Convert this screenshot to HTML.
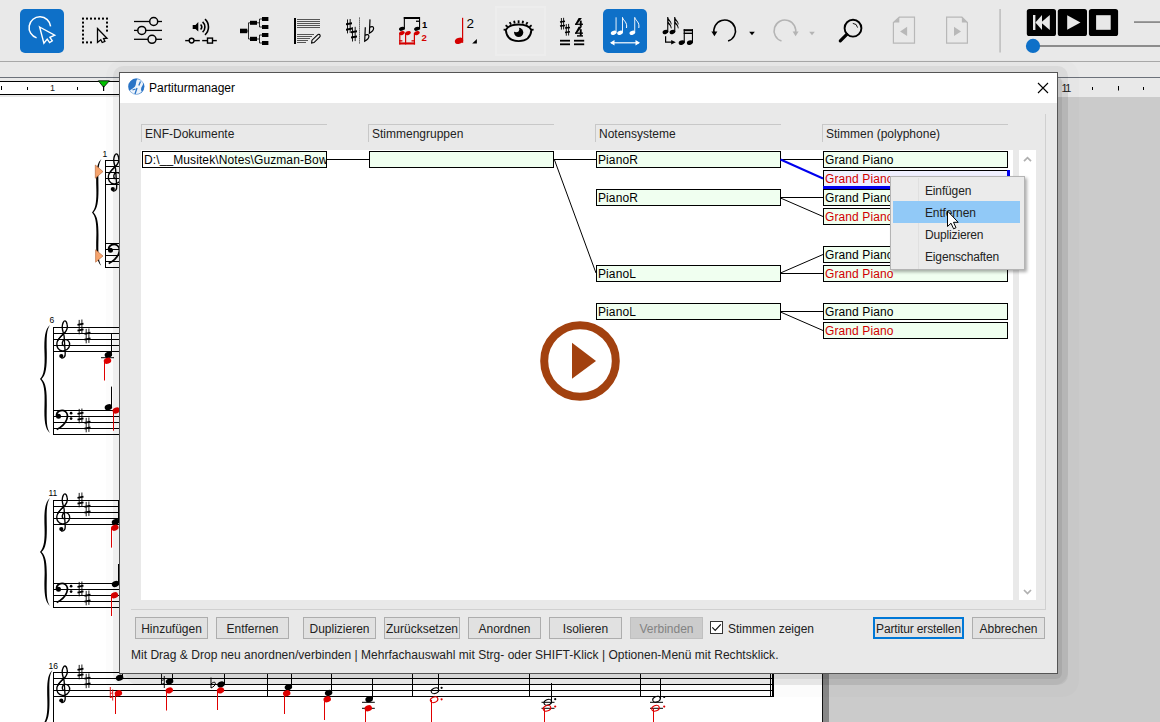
<!DOCTYPE html>
<html><head><meta charset="utf-8">
<style>
*{box-sizing:border-box}
html,body{margin:0;padding:0}
body{width:1160px;height:722px;position:relative;overflow:hidden;background:#e9e9e9;font-family:"Liberation Sans",sans-serif;font-size:12px;color:#000}
.a{position:absolute}
svg{position:absolute;overflow:visible}
.btn{position:absolute;white-space:nowrap;top:617px;height:22px;background:#e1e1e1;border:1px solid #adadad;text-align:center;line-height:22px;font-size:12px;color:#222}
.box{position:absolute;height:17px;border:1px solid #000;background:#f0fff0;font-size:12px;line-height:17px;padding-left:1px;white-space:nowrap;overflow:hidden;letter-spacing:0.1px}
.hdr{position:absolute;top:124px;height:18px;width:186px;border-top:1px solid #c8c8c8;border-left:1px solid #c8c8c8;font-size:12px;line-height:19px;padding-left:3px;color:#222}
.mi{position:absolute;left:925px;font-size:12px;color:#222;margin-top:1px;letter-spacing:-0.15px}
</style></head><body>
<svg width="1160" height="61" style="left:0;top:0" viewBox="0 0 1160 61">
<!-- 1 select tool (active) -->
<rect x="20" y="9" width="44" height="44" rx="5" fill="#0e70c8"/>
<path d="M36.6 37.9 A10.8 10.8 0 1 1 50.6 26.4" fill="none" stroke="#fff" stroke-width="1.5"/>
<path d="M39.6 27 L54.7 35.2 L49.9 37.3 L52.3 40.8 L49.6 42.6 L47.2 39.1 L43.9 43.3 Z" fill="#0e70c8" stroke="#fff" stroke-width="1.4" stroke-linejoin="miter"/>
<!-- 2 rectangle select -->
<g fill="#000">
<rect x="82" y="17.6" width="2" height="2"/><rect x="86" y="17.6" width="2" height="2"/><rect x="90" y="17.6" width="2" height="2"/><rect x="94" y="17.6" width="2" height="2"/><rect x="98" y="17.6" width="2" height="2"/><rect x="102" y="17.6" width="2" height="2"/><rect x="106" y="17.6" width="2" height="2"/>
<rect x="82" y="21.6" width="2" height="2"/><rect x="82" y="25.6" width="2" height="2"/><rect x="82" y="29.6" width="2" height="2"/><rect x="82" y="33.6" width="2" height="2"/><rect x="82" y="37.6" width="2" height="2"/><rect x="82" y="41.4" width="2" height="2"/>
<rect x="86" y="41.4" width="2" height="2"/><rect x="90" y="41.4" width="2" height="2"/>
<rect x="106" y="21.6" width="2" height="2"/><rect x="106" y="25.6" width="2" height="2"/><rect x="106" y="29.6" width="2" height="2"/>
</g>
<path d="M97.5 28.5 L107 38.2 L103.6 38.6 L104.9 41.4 L102.2 42.5 L100.8 39.8 L97.5 42.4 Z" fill="#e9e9e9" stroke="#000" stroke-width="1.3"/>
<!-- 3 sliders -->
<g stroke="#000" stroke-width="1.3" fill="#e9e9e9">
<line x1="134" y1="21.5" x2="162" y2="21.5"/><line x1="134" y1="30.4" x2="162" y2="30.4"/><line x1="134" y1="39.3" x2="162" y2="39.3"/>
<circle cx="153.7" cy="21.5" r="4" stroke-width="1.5"/><circle cx="141.8" cy="30.4" r="4" stroke-width="1.5"/><circle cx="152" cy="39.3" r="4" stroke-width="1.5"/>
</g>
<!-- 4 speaker -->
<path d="M192.7 25 L195.5 25 L198.3 22 L198.3 31.6 L195.5 29 L192.7 29 Z" fill="#000"/>
<g fill="none" stroke="#000" stroke-width="1.6">
<path d="M200.6 24.5 A3.6 3.6 0 0 1 200.6 29.5"/>
<path d="M202.6 21.8 A7 7 0 0 1 202.6 32.2"/>
<path d="M205 19.2 A10.5 10.5 0 0 1 205 34.8"/>
</g>
<g stroke="#000" stroke-width="1.4" fill="#e9e9e9">
<line x1="185.2" y1="40.6" x2="199.8" y2="40.6"/><line x1="202.2" y1="40.6" x2="216.8" y2="40.6"/>
<circle cx="191.6" cy="40.6" r="2.4"/><rect x="207.5" y="38.1" width="5" height="5"/>
</g>
<!-- 5 tree -->
<g fill="#000">
<rect x="240" y="28.7" width="7.3" height="4.5"/>
<rect x="250" y="20.8" width="7" height="4"/><rect x="250" y="36.8" width="7" height="4.2"/>
<rect x="262" y="17" width="6.4" height="4"/><rect x="262" y="25" width="6.4" height="4"/><rect x="262" y="33" width="6.4" height="4"/><rect x="262" y="41" width="6.4" height="4"/>
</g>
<g stroke="#000" stroke-width="0.8" fill="none">
<path d="M247 31 H248.5 M248.5 22.8 V39 M248.5 22.8 H250 M248.5 39 H250"/>
<path d="M257 22.8 H259.5 M259.5 19 V27 M259.5 19 H262 M259.5 27 H262"/>
<path d="M257 39 H259.5 M259.5 35 V43 M259.5 35 H262 M259.5 43 H262"/>
</g>
<!-- 6 score edit -->
<rect x="294" y="18" width="2" height="26" fill="#000"/>
<g fill="#555">
<rect x="297" y="19" width="23" height="1"/><rect x="297" y="21" width="23" height="1"/><rect x="297" y="23" width="23" height="1"/><rect x="297" y="25" width="23" height="1"/><rect x="297" y="27" width="23" height="1"/>
<rect x="297" y="34" width="17" height="1"/><rect x="297" y="36" width="15" height="1"/><rect x="297" y="38" width="13" height="1"/><rect x="297" y="40" width="11" height="1"/><rect x="297" y="42" width="9" height="1"/>
</g>
<path d="M311.6 43 L312 40.2 L317.6 34.8 C318.4 34 319.6 34.2 320 35 C320.4 35.8 320.2 36.6 319.6 37.2 L314 42.6 Z" fill="#e9e9e9" stroke="#000" stroke-width="1.1"/>
<!-- 7 sharps | flats -->
<g fill="#000">
<rect x="347" y="19.4" width="0.9" height="14"/><rect x="349.7" y="19" width="0.9" height="14"/>
<rect x="352" y="27.2" width="0.9" height="14.3"/><rect x="354.7" y="26.8" width="0.9" height="14.3"/>
<path d="M346 23.3 L352 22.2 L352 24.2 L346 25.3 Z"/><path d="M346 28.7 L352 27.6 L352 29.6 L346 30.7 Z"/>
<path d="M351 31.3 L357 30.2 L357 32.2 L351 33.3 Z"/><path d="M351 36.6 L357 35.5 L357 37.5 L351 38.6 Z"/>
</g>
<line x1="359.5" y1="17.6" x2="359.5" y2="44" stroke="#000" stroke-width="0.9" stroke-dasharray="1 1"/>
<g fill="none" stroke="#000">
<path d="M365.3 27.2 L364.7 41.2 C367 40 368.9 38.4 368.9 36.3 C368.9 34.4 366.8 34.2 364.9 35.6" stroke-width="1.2"/>
<path d="M370 19.4 L369.4 33.2 C371.7 32 373.6 30.4 373.6 28.3 C373.6 26.4 371.5 26.2 369.6 27.6" stroke-width="1.2"/>
</g>
<!-- 8 voices -->
<g fill="#000">
<rect x="403.8" y="17" width="16.2" height="2"/>
<rect x="403.8" y="17" width="1.1" height="12.5"/><rect x="419" y="17" width="1.1" height="12.5"/>
<rect x="416" y="20.6" width="4" height="1.3"/>
<ellipse cx="401.8" cy="28.8" rx="2.9" ry="1.9" transform="rotate(-20 401.8 28.8)"/>
<ellipse cx="416.9" cy="28.8" rx="2.9" ry="1.9" transform="rotate(-20 416.9 28.8)"/>
</g>
<text x="422" y="27.9" font-family="Liberation Sans" font-weight="bold" font-size="9.5" fill="#000">1</text>
<g fill="#d40000">
<ellipse cx="401.9" cy="33.1" rx="2.9" ry="1.9" transform="rotate(-20 401.9 33.1)"/>
<ellipse cx="408" cy="33.1" rx="2.9" ry="1.9" transform="rotate(-20 408 33.1)"/>
<ellipse cx="416.9" cy="33.1" rx="2.9" ry="1.9" transform="rotate(-20 416.9 33.1)"/>
<rect x="399.2" y="33" width="1.2" height="11.5"/><rect x="405" y="33" width="1.2" height="11.5"/><rect x="413.8" y="33" width="1.2" height="11.5"/>
<rect x="399.2" y="42.4" width="15.9" height="2.1"/>
<rect x="399.2" y="40.2" width="3.2" height="1.3"/><rect x="411.5" y="40.2" width="3.2" height="1.3"/>
</g>
<text x="421.6" y="40.9" font-family="Liberation Sans" font-weight="bold" font-size="9.6" fill="#d40000">2</text>
<!-- 9 note 2 -->
<rect x="462" y="17.8" width="1.2" height="25" fill="#d40000"/>
<ellipse cx="459" cy="40.8" rx="4.3" ry="2.9" transform="rotate(-22 459 40.8)" fill="#d40000"/>
<text x="466.6" y="28.1" font-family="Liberation Sans" font-size="13.5" fill="#000">2</text>
<path d="M472.2 43.6 L476.9 43.6 L476.9 38.9 Z" fill="#000"/>
<!-- 10 eye -->
<rect x="495" y="6" width="51" height="50" fill="#ededed"/><rect x="497" y="8" width="47" height="46" fill="#eaeaea"/>
<path d="M505.8,30 C509.5,22.6 527.7,22.6 531.4,30 C530.8,37.5 526,41.1 518.6,41.1 C511.2,41.1 506.4,37.5 505.8,30 Z" fill="#eaeaea" stroke="#000" stroke-width="1.9"/>
<g stroke="#000" stroke-width="1.8">
<line x1="506.4" y1="29.8" x2="503.6" y2="29.6"/><line x1="507.8" y1="26.9" x2="505.6" y2="25.2"/><line x1="511" y1="24.6" x2="509.7" y2="22.1"/><line x1="514.7" y1="23.5" x2="514.1" y2="20.7"/><line x1="518.6" y1="23.2" x2="518.6" y2="20.3"/><line x1="522.5" y1="23.5" x2="523.1" y2="20.7"/><line x1="526.2" y1="24.6" x2="527.5" y2="22.1"/><line x1="529.4" y1="26.9" x2="531.6" y2="25.2"/><line x1="530.8" y1="29.8" x2="533.6" y2="29.6"/>
</g>
<circle cx="518.7" cy="32.4" r="4.6" fill="#000"/>
<circle cx="516.2" cy="29.3" r="3" fill="#eaeaea"/>
<!-- 11 key/time sig -->
<g stroke="#000" fill="none">
<g stroke-width="0.9"><line x1="561.4" y1="18" x2="561.4" y2="29.6"/><line x1="563.6" y1="17.8" x2="563.6" y2="29.4"/><line x1="566.3" y1="24.1" x2="566.3" y2="35.7"/><line x1="568.6" y1="23.9" x2="568.6" y2="35.5"/></g>
<g stroke-width="1.5"><line x1="560" y1="21.9" x2="565" y2="21.2"/><line x1="560" y1="26.1" x2="565" y2="25.4"/><line x1="565" y1="28.1" x2="570" y2="27.4"/><line x1="565" y1="32.5" x2="570" y2="31.8"/></g>
</g>
<g fill="#000">
<path d="M578.6 18 L581.9 18 L576.7 24.8 L574.9 24.8 Z"/><rect x="575" y="23.6" width="8" height="1.3"/><rect x="579.8" y="20.6" width="1.9" height="6.2"/>
<path d="M578.6 26.8 L581.9 26.8 L576.7 33.6 L574.9 33.6 Z"/><rect x="575" y="32.5" width="8" height="1.3"/><rect x="579.8" y="29.2" width="1.9" height="6.6"/><rect x="577" y="35.2" width="6" height="1.4"/>
</g>
<g fill="#000">
<rect x="560" y="39.8" width="10" height="1.8"/><rect x="560" y="43.4" width="10" height="1.8"/>
<rect x="574" y="39.8" width="10.2" height="1.8"/><rect x="574" y="43.4" width="10.2" height="1.8"/>
</g>
<!-- 12 spacing (active) -->
<rect x="603" y="9" width="44" height="44" rx="5" fill="#0e70c8"/>
<g fill="#fff">
<rect x="615.6" y="17.3" width="0.9" height="15.5"/><rect x="622" y="17.3" width="0.9" height="15.5"/><rect x="634.3" y="17.3" width="0.9" height="15.5"/>
<ellipse cx="613.6" cy="32.8" rx="2.9" ry="2" transform="rotate(-20 613.6 32.8)"/>
<ellipse cx="620" cy="32.8" rx="2.9" ry="2" transform="rotate(-20 620 32.8)"/>
<ellipse cx="632.3" cy="32.8" rx="2.9" ry="2" transform="rotate(-20 632.3 32.8)"/>
</g>
<g fill="none" stroke="#fff" stroke-width="1">
<path d="M622.5 17.5 C623.5 21 627.5 22 626.5 28"/>
<path d="M634.8 17.5 C635.8 21 639.8 22 638.8 28"/>
<line x1="611" y1="42.8" x2="639" y2="42.8" stroke-width="1.2"/>
</g>
<path d="M610 42.8 L614.5 40 L614.5 45.6 Z M640 42.8 L635.5 40 L635.5 45.6 Z" fill="#fff"/>
<!-- 13 rhythm -->
<g fill="#000">
<rect x="667.2" y="17" width="1.1" height="15"/><rect x="674.2" y="17" width="1.1" height="15"/>
<ellipse cx="665.4" cy="32" rx="2.9" ry="2" transform="rotate(-20 665.4 32)"/>
<ellipse cx="672.4" cy="32" rx="2.9" ry="2" transform="rotate(-20 672.4 32)"/>
<path d="M667.8 17 C668.5 19.5 671.8 21 671.6 24.5 L670.8 24.2 C670.8 22 669 21 667.8 20.5 Z"/>
<path d="M667.8 20.5 C668.5 23 671.8 24.5 671.6 28.5 L670.8 28.2 C670.8 26 669 24.5 667.8 24 Z"/>
<path d="M674.8 17 C675.5 19.5 678.8 21 678.6 24.5 L677.8 24.2 C677.8 22 676 21 674.8 20.5 Z"/>
<path d="M674.8 20.5 C675.5 23 678.8 24.5 678.6 28.5 L677.8 28.2 C677.8 26 676 24.5 674.8 24 Z"/>
<rect x="683.7" y="29.2" width="1.1" height="13.5"/><rect x="691.9" y="29.2" width="1.1" height="13.5"/>
<rect x="683.7" y="29.2" width="9.3" height="2"/><rect x="683.7" y="32.6" width="9.3" height="1.4"/>
<ellipse cx="681.7" cy="42.6" rx="3.1" ry="2.2" transform="rotate(-20 681.7 42.6)"/>
<ellipse cx="689.9" cy="42.6" rx="3.1" ry="2.2" transform="rotate(-20 689.9 42.6)"/>
</g>
<path d="M665.6 36.2 V42.2 H672" fill="none" stroke="#000" stroke-width="1.2"/>
<path d="M675.8 42.2 L671.2 39.9 L671.2 44.5 Z" fill="#000"/>
<!-- 14 undo -->
<path d="M714.3 33.8 A10.8 10.8 0 1 1 728.1 41.1" fill="none" stroke="#000" stroke-width="1.6"/>
<path d="M711.4 31.6 L717.4 31.6 L714.4 36.2 Z" fill="#000"/>
<path d="M749.2 31.8 L754.8 31.8 L752 35.2 Z" fill="#000"/>
<!-- 15 redo (disabled) -->
<path d="M795.3 33.8 A10.8 10.8 0 1 0 781.5 41.1" fill="none" stroke="#b4b4b4" stroke-width="1.6"/>
<path d="M792.6 31.6 L798.6 31.6 L795.6 36.2 Z" fill="#b4b4b4"/>
<path d="M809.2 31.8 L814.8 31.8 L812 35.2 Z" fill="#b4b4b4"/>
<!-- 16 zoom -->
<circle cx="853" cy="28.2" r="8.4" fill="none" stroke="#000" stroke-width="1.9"/>
<path d="M852.8 23.4 A5 5 0 0 1 857.6 27.6" fill="none" stroke="#000" stroke-width="0.9"/>
<line x1="846.8" y1="34.4" x2="840.3" y2="40.9" stroke="#000" stroke-width="3.2" stroke-linecap="round"/>
<!-- 17 page prev -->
<path d="M899.3 17.2 L914.5 17.2 L914.5 43.2 L893.4 43.2 L893.4 22.6 Z" fill="none" stroke="#b8b8b8" stroke-width="1.2"/>
<path d="M893.6 22.6 L899.3 17.2 L899.3 22.6 Z" fill="#b8b8b8"/>
<path d="M900.1 31.4 L907.1 26.7 L907.1 36 Z" fill="#b8b8b8"/>
<!-- 18 page next -->
<path d="M946.6 17.2 L961.9 17.2 L967.4 22.6 L967.4 43.2 L946.6 43.2 Z" fill="none" stroke="#b8b8b8" stroke-width="1.2"/>
<path d="M961.9 17.2 L967.3 22.6 L961.9 22.6 Z" fill="#b8b8b8"/>
<path d="M961 31.4 L954 26.7 L954 36 Z" fill="#b8b8b8"/>
<!-- separator -->
<rect x="999.2" y="9" width="1.8" height="43.5" fill="#c4c4c4"/>
<!-- media -->
<rect x="1026.8" y="9" width="29.2" height="27" rx="2.6" fill="#000"/>
<rect x="1057.8" y="9" width="29.2" height="27" rx="2.6" fill="#000"/>
<rect x="1088.9" y="9" width="29.2" height="27" rx="2.6" fill="#000"/>
<g fill="#e8e8e8">
<rect x="1033" y="15" width="2.4" height="15"/>
<path d="M1035.4 22.5 L1042 15 L1042 30 Z"/><path d="M1041 22.5 L1049.8 15 L1049.8 30 Z"/>
<path d="M1067.2 15.2 L1080.5 22.4 L1067.2 29.8 Z"/>
<rect x="1096.1" y="15.2" width="14.6" height="14.6"/>
</g>
<rect x="1134" y="21.2" width="26" height="1.8" fill="#8c8c8c"/>
<rect x="1035" y="45" width="125" height="2" fill="#8c8c8c"/>
<circle cx="1033" cy="45.9" r="7.1" fill="#0e70c8"/>
</svg>

<!-- toolbar separator -->
<div class="a" style="left:0;top:61px;width:1160px;height:1px;background:#a8a8a8"></div>
<!-- ruler -->
<div class="a" style="left:0;top:77px;width:1160px;height:1px;background:#6c717a"></div>
<div class="a" style="left:0;top:81px;width:822px;height:14px;background:#fff;border-top:1px solid #000;border-bottom:1px solid #000"></div>

<!-- ruler ticks -->
<svg width="1160" height="20" style="left:0;top:78px" viewBox="0 78 1160 20">
<g fill="#000">
<rect x="1" y="86" width="1" height="4"/><rect x="27" y="87" width="1" height="3"/><rect x="77" y="87" width="1" height="3"/>
<rect x="1092" y="87" width="1" height="3"/><rect x="1118" y="86" width="1" height="4.5"/><rect x="1143" y="87" width="1" height="3"/>
</g>
<text x="50" y="91" font-family="Liberation Sans" font-size="9" fill="#222">1</text>
<text x="1061.5" y="91.5" font-family="Liberation Sans" font-size="11" fill="#222" letter-spacing="-1.6">11</text>
<path d="M98.4 80.8 L109.4 80.8 L103.6 87.3 Z" fill="#00c000" stroke="#000" stroke-width="0.8"/>
<rect x="103" y="86" width="1.2" height="5" fill="#000"/>
</svg>
<!-- page -->
<div class="a" style="left:0;top:97px;width:822px;height:625px;background:#fff"></div>
<div class="a" style="left:822px;top:97px;width:1px;height:625px;background:#111"></div>
<div class="a" style="left:823px;top:97px;width:6px;height:625px;background:#888"></div>
<div class="a" style="left:829px;top:97px;width:331px;height:625px;background:#cbcbcb"></div>

<!-- SCORE -->
<svg width="822" height="722" style="left:0;top:0" viewBox="0 0 822 722">
<defs>
<path id="tc" d="M7.4,18.6 C5.6,17.6 5.9,13.3 8.7,12.7 C12.1,12.1 14,15.2 13.6,18.1 C13.2,22 9.6,24.2 6.3,23.8 C2.1,23.2 0.3,19.6 0.9,16 C1.6,11.6 6.2,8.4 8.9,5.5 C11.1,3 11.7,0 11.1,-2.6 C10.6,-5.1 9.6,-6.1 8.9,-6.1 C7.8,-6.1 6.2,-3.6 6.2,0 C6.2,3.2 7.6,6.2 8.1,9 L9.2,26 C9.4,29.6 8,31.3 5.8,31.1" fill="none" stroke="#000" stroke-width="1.35" stroke-linecap="round"/>
<g id="tcg"><use href="#tc"/><path d="M1.6,14 C3,10.5 6.5,8 9.2,5.2" fill="none" stroke="#000" stroke-width="1.2"/><circle cx="5.3" cy="29.1" r="2.1" fill="#000"/></g>
<g id="bc"><circle cx="3" cy="6.2" r="2.5" fill="#000"/><path d="M1,6 C0.8,1 6.5,-1.2 10,1.6 C13.6,4.6 12.6,13.6 1.2,19.5" fill="none" stroke="#000" stroke-width="1.7"/><circle cx="15.6" cy="3.2" r="1.35" fill="#000"/><circle cx="15.6" cy="8.6" r="1.35" fill="#000"/></g>
<g id="sh"><g stroke="#000" stroke-width="0.9"><line x1="-1.3" y1="-7.1" x2="-1.3" y2="7.3"/><line x1="1.4" y1="-7.5" x2="1.4" y2="6.9"/></g><g stroke="#000" stroke-width="1.7"><line x1="-3" y1="-2.2" x2="3" y2="-3.4"/><line x1="-3" y1="3.6" x2="3" y2="2.4"/></g></g>
<path id="br" d="M10,0 C5,4 4,12 4.5,28 C5,42 4,50 0,54 C4,58 5,66 4.5,80 C4,96 5,104 10,108 C6.5,103 6.5,96 6.8,80 C7,66 6,58 1.6,54 C6,50 7,42 6.8,28 C6.5,12 6.5,5 10,0 Z" fill="#000"/>
<ellipse id="nh" cx="0" cy="0" rx="3.8" ry="2.95" transform="rotate(-22)"/>
<g id="hh"><ellipse cx="0" cy="0" rx="3.9" ry="2.7" transform="rotate(-22)" fill="none" stroke="currentColor" stroke-width="1.1"/></g>
</defs>
<text x="102.6" y="156.8" font-family="Liberation Sans" font-size="8.5" fill="#000">1</text>
<use href="#br" transform="translate(92,159) scale(0.95,0.99)"/>
<rect x="105" y="160" width="20" height="1" fill="#000"/>
<rect x="105" y="166" width="20" height="1" fill="#000"/>
<rect x="105" y="172" width="20" height="1" fill="#000"/>
<rect x="105" y="178" width="20" height="1" fill="#000"/>
<rect x="105" y="184" width="20" height="1" fill="#000"/>
<rect x="105" y="243" width="20" height="1" fill="#000"/>
<rect x="105" y="249" width="20" height="1" fill="#000"/>
<rect x="105" y="255" width="20" height="1" fill="#000"/>
<rect x="105" y="261" width="20" height="1" fill="#000"/>
<rect x="105" y="267" width="20" height="1" fill="#000"/>
<rect x="105" y="160" width="1" height="108" fill="#000"/>
<use href="#tcg" transform="translate(107.5,160)"/>
<use href="#bc" transform="translate(107.5,244)"/>
<path d="M95.3,165 L103,171.6 L95.3,178.2 Z" fill="#f5a46e" stroke="#b06030" stroke-width="0.6"/>
<path d="M95.6,249.8 L103,256 L95.6,262.2 Z" fill="#f5a46e" stroke="#b06030" stroke-width="0.6"/>
<text x="49.5" y="322.5" font-family="Liberation Sans" font-size="8.5" fill="#000">6</text>
<use href="#br" transform="translate(40,325)"/>
<rect x="53" y="327" width="72" height="1" fill="#000"/>
<rect x="53" y="333" width="72" height="1" fill="#000"/>
<rect x="53" y="339" width="72" height="1" fill="#000"/>
<rect x="53" y="345" width="72" height="1" fill="#000"/>
<rect x="53" y="351" width="72" height="1" fill="#000"/>
<rect x="53" y="410" width="72" height="1" fill="#000"/>
<rect x="53" y="416" width="72" height="1" fill="#000"/>
<rect x="53" y="422" width="72" height="1" fill="#000"/>
<rect x="53" y="428" width="72" height="1" fill="#000"/>
<rect x="53" y="434" width="72" height="1" fill="#000"/>
<rect x="53" y="327" width="1" height="108" fill="#000"/>
<use href="#tcg" transform="translate(56,327)"/>
<use href="#bc" transform="translate(55.5,410)"/>
<use href="#sh" x="80.5" y="327"/><use href="#sh" x="87.5" y="336"/>
<use href="#sh" x="80.5" y="416"/><use href="#sh" x="87.5" y="425"/>
<use href="#nh" x="108.4" y="354.8" fill="#000"/>
<rect x="111" y="333.4" width="1" height="21.600000000000023" fill="#000"/>
<rect x="101" y="357.2" width="13" height="1" fill="#000"/>
<use href="#nh" x="107.5" y="360.8" fill="#e00000"/>
<rect x="104" y="361" width="1" height="19.5" fill="#e00000"/>
<use href="#nh" x="108.4" y="407.3" fill="#000"/>
<rect x="111" y="386.6" width="1" height="20.69999999999999" fill="#000"/>
<use href="#nh" x="116.3" y="410.5" fill="#e00000"/>
<rect x="113" y="411" width="1" height="19.69999999999999" fill="#e00000"/>
<text x="48.5" y="495.5" font-family="Liberation Sans" font-size="8.5" fill="#000">11</text>
<use href="#br" transform="translate(40,498)"/>
<rect x="53" y="500" width="72" height="1" fill="#000"/>
<rect x="53" y="506" width="72" height="1" fill="#000"/>
<rect x="53" y="512" width="72" height="1" fill="#000"/>
<rect x="53" y="518" width="72" height="1" fill="#000"/>
<rect x="53" y="524" width="72" height="1" fill="#000"/>
<rect x="53" y="583" width="72" height="1" fill="#000"/>
<rect x="53" y="589" width="72" height="1" fill="#000"/>
<rect x="53" y="595" width="72" height="1" fill="#000"/>
<rect x="53" y="601" width="72" height="1" fill="#000"/>
<rect x="53" y="607" width="72" height="1" fill="#000"/>
<rect x="53" y="500" width="1" height="108" fill="#000"/>
<use href="#tcg" transform="translate(56,500)"/>
<use href="#bc" transform="translate(55.5,583)"/>
<use href="#sh" x="80.5" y="500"/><use href="#sh" x="87.5" y="509"/>
<use href="#sh" x="80.5" y="589"/><use href="#sh" x="87.5" y="598"/>
<use href="#nh" x="115.5" y="522" fill="#000"/>
<rect x="118" y="501" width="1" height="21" fill="#000"/>
<use href="#nh" x="114.8" y="527.7" fill="#e00000"/>
<rect x="111" y="528" width="1" height="19.600000000000023" fill="#e00000"/>
<use href="#nh" x="115.5" y="584" fill="#000"/>
<rect x="118" y="564" width="1" height="20" fill="#000"/>
<use href="#nh" x="114.5" y="595.3" fill="#e00000"/>
<rect x="111" y="595" width="1" height="21" fill="#e00000"/>
<text x="48.5" y="669.2" font-family="Liberation Sans" font-size="8.5" fill="#000">16</text>
<use href="#br" transform="translate(43,670) scale(0.95,1)"/>
<rect x="53" y="672" width="720.5" height="1" fill="#000"/>
<rect x="53" y="678" width="720.5" height="1" fill="#000"/>
<rect x="53" y="684" width="720.5" height="1" fill="#000"/>
<rect x="53" y="690" width="720.5" height="1" fill="#000"/>
<rect x="53" y="696" width="720.5" height="1" fill="#000"/>
<rect x="53" y="672" width="1" height="60" fill="#000"/>
<use href="#tcg" transform="translate(56,672) scale(1,0.98)"/>
<use href="#sh" x="80.5" y="672"/><use href="#sh" x="87.5" y="680.9"/>
<rect x="267" y="672" width="1" height="25" fill="#000"/>
<rect x="412" y="672" width="1" height="25" fill="#000"/>
<rect x="529" y="672" width="1" height="25" fill="#000"/>
<rect x="640" y="672" width="1" height="25" fill="#000"/>
<rect x="770" y="672" width="1" height="25" fill="#000"/>
<rect x="772" y="672" width="2" height="25" fill="#000"/>
<use href="#nh" x="119.6" y="677.8" fill="#000"/>
<rect x="122" y="660" width="1" height="17.799999999999955" fill="#000"/>
<use href="#nh" x="118.4" y="693.3" fill="#e00000"/>
<rect x="115" y="693.5" width="1" height="20.5" fill="#e00000"/>
<path d="M110.3,687 V698 M112.7,689.5 V700.5 M110.3,693.6 L112.7,692.8 M110.3,697.6 L112.7,696.8" stroke="#e00000" stroke-width="0.9" fill="none"/>
<path d="M161.5,672 V684 M164.3,676 V688 M161.5,680.5 L164.3,679.6 M161.5,684.3 L164.3,683.4" stroke="#000" stroke-width="0.9" fill="none"/>
<use href="#nh" x="169.6" y="681.4" fill="#000"/>
<rect x="172" y="660" width="1" height="21.399999999999977" fill="#000"/>
<use href="#nh" x="169.3" y="690.4" fill="#e00000"/>
<rect x="166" y="690.6" width="1" height="19.899999999999977" fill="#e00000"/>
<path d="M211,677.5 V688 C213.5,687 215.6,685 215.4,683.3 C215.2,681.6 213,682 211,684" stroke="#000" stroke-width="1" fill="none"/>
<use href="#nh" x="221" y="684.5" fill="#000"/>
<rect x="224" y="660" width="1" height="24.5" fill="#000"/>
<use href="#nh" x="220.5" y="690.4" fill="#e00000"/>
<rect x="217" y="690.6" width="1" height="19.399999999999977" fill="#e00000"/>
<use href="#nh" x="288.4" y="687.2" fill="#000"/>
<rect x="291" y="660" width="1" height="27.200000000000045" fill="#000"/>
<use href="#nh" x="286.7" y="693.3" fill="#e00000"/>
<rect x="284" y="693.5" width="1" height="20.5" fill="#e00000"/>
<use href="#nh" x="328.6" y="692.9" fill="#000"/>
<rect x="331" y="660" width="1" height="32.89999999999998" fill="#000"/>
<use href="#nh" x="327.2" y="699.3" fill="#e00000"/>
<rect x="324" y="699.5" width="1" height="20.5" fill="#e00000"/>
<rect x="362" y="701.8" width="12.8" height="1" fill="#000"/><rect x="362" y="707.8" width="12.8" height="1" fill="#000"/>
<use href="#nh" x="369.1" y="699.3" fill="#000"/>
<rect x="372" y="678.6" width="1" height="20.699999999999932" fill="#000"/>
<use href="#nh" x="368.3" y="708.3" fill="#e00000"/>
<rect x="365" y="708.5" width="1" height="13.5" fill="#e00000"/>
<use href="#hh" x="435" y="690.7" style="color:#000"/>
<rect x="438" y="660" width="1" height="30.5" fill="#000"/>
<circle cx="441.6" cy="687.8" r="1.1" fill="#000"/>
<use href="#hh" x="434.1" y="699.7" style="color:#e00000"/>
<rect x="431" y="700" width="1" height="22" fill="#e00000"/>
<circle cx="441.6" cy="699.3" r="1.1" fill="#e00000"/>
<rect x="541.5" y="701.8" width="13" height="1" fill="#000"/><rect x="541.5" y="707.8" width="13" height="1" fill="#000"/>
<use href="#hh" x="547.8" y="702.3" style="color:#000"/>
<rect x="551" y="683" width="1" height="19" fill="#000"/>
<circle cx="555.2" cy="699.2" r="1.1" fill="#000"/>
<use href="#hh" x="547" y="708.3" style="color:#e00000"/>
<rect x="544" y="708.6" width="1" height="13.399999999999977" fill="#e00000"/>
<circle cx="555.2" cy="706.5" r="1.1" fill="#e00000"/>
<rect x="650" y="701.8" width="13" height="1" fill="#000"/><rect x="650" y="707.8" width="13" height="1" fill="#000"/>
<use href="#hh" x="656.5" y="699.2" style="color:#000"/>
<rect x="660" y="678.5" width="1" height="20.5" fill="#000"/>
<circle cx="664.2" cy="697" r="1.1" fill="#000"/>
<use href="#hh" x="655.5" y="708.3" style="color:#e00000"/>
<rect x="653" y="708.6" width="1" height="13.399999999999977" fill="#e00000"/>
<circle cx="664.2" cy="706.6" r="1.1" fill="#e00000"/>
</svg>
<!-- /SCORE -->
<!-- DIALOG -->
<div class="a" style="left:106px;top:60px;width:973px;height:637px;border-radius:16px;background:rgba(0,0,0,0.012)"></div>
<div class="a" style="left:113px;top:66px;width:955px;height:619px;border-radius:10px;background:rgba(0,0,0,0.05)"></div>
<div class="a" style="left:125px;top:78px;width:943px;height:607px;border-radius:14px;background:rgba(0,0,0,0.035)"></div>
<div class="a" style="left:121px;top:76px;width:941px;height:603px;border-radius:6px;background:rgba(0,0,0,0.065)"></div>
<div class="a" style="left:119px;top:72px;width:939px;height:602px;background:#e9e9e9;border:1px solid #555"></div>
<div class="a" style="left:120px;top:73px;width:937px;height:30px;background:#fff"></div>
<div class="a" style="left:149px;top:80px;font-size:12px;line-height:16px;color:#000">Partiturmanager</div>

<!-- group frame -->
<div class="a" style="left:1045px;top:114px;width:1px;height:496px;background:#d0d0d0"></div>
<div class="a" style="left:131px;top:609px;width:915px;height:1px;background:#d0d0d0"></div>

<!-- headers -->
<div class="hdr" style="left:141px">ENF-Dokumente</div>
<div class="hdr" style="left:368px">Stimmengruppen</div>
<div class="hdr" style="left:595px">Notensysteme</div>
<div class="hdr" style="left:822px">Stimmen (polyphone)</div>

<!-- list area -->
<div class="a" style="left:141px;top:150px;width:872px;height:450px;background:#fff"></div>
<!-- scrollbar -->
<div class="a" style="left:1019px;top:150px;width:17px;height:450px;background:#fff"></div>

<!-- LIST -->
<div class="box" style="left:142px;top:151px;width:185px;padding-left:1px;background:linear-gradient(to right,#fff 0,#fff 78px,#f0fff0 78px)">D:\<span style="position:relative;top:-1px">__</span>Musitek\Notes\Guzman-Bowman</div>
<div class="box" style="left:369px;top:151px;width:185px"></div>
<div class="box" style="left:596px;top:151px;width:185px">PianoR</div>
<div class="box" style="left:596px;top:189px;width:185px">PianoR</div>
<div class="box" style="left:596px;top:265px;width:185px">PianoL</div>
<div class="box" style="left:596px;top:303px;width:185px">PianoL</div>
<div class="box" style="left:823px;top:151px;width:185px;">Grand Piano</div>
<div class="box" style="left:823px;top:170px;width:185px;color:#d00000;background:#f0f0ff;">Grand Piano</div>
<div class="box" style="left:823px;top:189px;width:185px;">Grand Piano</div>
<div class="box" style="left:823px;top:208px;width:185px;color:#d00000;">Grand Piano</div>
<div class="box" style="left:823px;top:246px;width:185px;">Grand Piano</div>
<div class="box" style="left:823px;top:265px;width:185px;color:#d00000;">Grand Piano</div>
<div class="box" style="left:823px;top:303px;width:185px;">Grand Piano</div>
<div class="box" style="left:823px;top:322px;width:185px;color:#d00000;">Grand Piano</div>
<div class="a" style="left:823px;top:186px;width:186px;height:3px;background:#0000ee"></div>
<div class="a" style="left:1007px;top:170px;width:3px;height:8px;background:#0000ee"></div>
<svg width="1160" height="722" style="left:0;top:0" viewBox="0 0 1160 722">
<g stroke="#000" stroke-width="1" fill="none" shape-rendering="crispEdges">
<line x1="327" y1="159.5" x2="369" y2="159.5"/><line x1="554" y1="159.5" x2="596" y2="159.5"/>
<line x1="781" y1="159.5" x2="823" y2="159.5"/>
<line x1="781" y1="197.5" x2="823" y2="197.5"/>
<line x1="781" y1="273.5" x2="823" y2="273.5"/>
<line x1="781" y1="311.5" x2="823" y2="311.5"/>
</g><g stroke="#000" stroke-width="1" fill="none">
<line x1="554.5" y1="160" x2="596" y2="273"/>
<line x1="780.5" y1="198" x2="823" y2="216.5"/>
<line x1="780.5" y1="273" x2="823" y2="254.5"/>
<line x1="780.5" y1="312" x2="823" y2="330.5"/>
</g>
<line x1="780.5" y1="159.5" x2="823" y2="178.5" stroke="#0000ee" stroke-width="2"/>
</svg>
<div class="a" style="left:890px;top:176px;width:135px;height:94px;background:#ebebeb;border:1px solid #b4b4b4;box-shadow:2px 2px 3px rgba(0,0,0,0.32)"></div>
<div class="a" style="left:918px;top:178px;width:1px;height:91px;background:#e0e0e0"></div>
<div class="a" style="left:893px;top:201px;width:127px;height:22px;background:#91c9f7"></div>
<div class="mi" style="top:183px">Einfügen</div>
<div class="mi" style="top:205px">Entfernen</div>
<div class="mi" style="top:227px">Duplizieren</div>
<div class="mi" style="top:249px">Eigenschaften</div>
<svg width="20" height="24" style="left:946px;top:210px" viewBox="0 0 20 24"><path d="M1.5 1 L1.5 16.5 L5 13.2 L7.6 18.8 L10 17.7 L7.5 12.3 L12.2 12.3 Z" fill="#fff" stroke="#000" stroke-width="1" stroke-linejoin="miter"/></svg>

<!-- /LIST -->

<!-- title icon -->
<svg width="18" height="18" style="left:127px;top:78px" viewBox="0 0 18 18">
<circle cx="9.3" cy="8.6" r="8" fill="#2a74c6"/>
<path d="M10.2 1 C8.5 4 9.5 6 8 8.5 C6.5 10.5 3.5 11.5 2 13 C3.5 15.5 6 16.8 9 16.7 C12 16.5 14 15 15 13.5 C13.5 12.5 13.8 10 15.2 8 C16 6.5 16.6 5 16.4 4 C15 2.2 12.8 1 10.2 1 Z" fill="#fff" opacity="0.92"/>
<path d="M13.5 3.5 L11.8 7.5 M10 10 L8 16 M5.5 12 L8.5 11" stroke="#2a74c6" stroke-width="1.3" fill="none"/>
<circle cx="9.3" cy="8.6" r="7.7" fill="none" stroke="#2a74c6" stroke-width="0.7" opacity="0.6"/>
</svg>
<!-- close X -->
<svg width="12" height="12" style="left:1036.5px;top:81.5px" viewBox="0 0 12 12"><path d="M1 1 L11 11 M11 1 L1 11" stroke="#000" stroke-width="1.1"/></svg>
<!-- scroll arrows -->
<svg width="12" height="8" style="left:1021px;top:155px" viewBox="0 0 12 8"><path d="M3 6.2 L6.5 2.6 L10 6.2" stroke="#b0b0b0" stroke-width="1.7" fill="none"/></svg>
<svg width="12" height="8" style="left:1021px;top:588px" viewBox="0 0 12 8"><path d="M3 2 L6.5 5.6 L10 2" stroke="#b0b0b0" stroke-width="1.7" fill="none"/></svg>
<!-- checkbox check -->

<!-- buttons -->
<div class="btn" style="left:135px;width:73px">Hinzufügen</div>
<div class="btn" style="left:216px;width:73px">Entfernen</div>
<div class="btn" style="left:303px;width:73px">Duplizieren</div>
<div class="btn" style="left:384px;width:76px">Zurücksetzen</div>
<div class="btn" style="left:468px;width:73px">Anordnen</div>
<div class="btn" style="left:549px;width:73px">Isolieren</div>
<div class="btn" style="left:630px;width:73px;background:#cccccc;border-color:#bfbfbf;color:#838383">Verbinden</div>
<div class="a" style="left:710px;top:621px;width:13px;height:13px;border:1px solid #333;background:#fff"></div>
<svg width="13" height="13" style="left:710px;top:621px" viewBox="0 0 13 13"><path d="M2.3 6.4 L5.2 9.3 L10.8 3.4" stroke="#111" stroke-width="1.2" fill="none"/></svg>
<div class="a" style="left:728px;top:621px;font-size:12px;line-height:16px;color:#222">Stimmen zeigen</div>
<div class="btn" style="left:873px;width:91px;border:2px solid #0078d7;line-height:20px;letter-spacing:-0.14px">Partitur erstellen</div>
<div class="btn" style="left:972px;width:73px">Abbrechen</div>
<div class="a" style="left:131px;top:647px;font-size:12px;line-height:16px;color:#222;white-space:nowrap;letter-spacing:0.02px">Mit Drag &amp; Drop neu anordnen/verbinden | Mehrfachauswahl mit Strg- oder SHIFT-Klick | Optionen-Menü mit Rechtsklick.</div>


<!-- play overlay -->
<svg width="90" height="90" style="left:535px;top:316px" viewBox="0 0 90 90">
<circle cx="45" cy="45" r="35.8" fill="none" stroke="#a2410f" stroke-width="8"/>
<path d="M37 26.8 L61 45 L37 62.8 Z" fill="#a2410f"/>
</svg>
</body></html>
